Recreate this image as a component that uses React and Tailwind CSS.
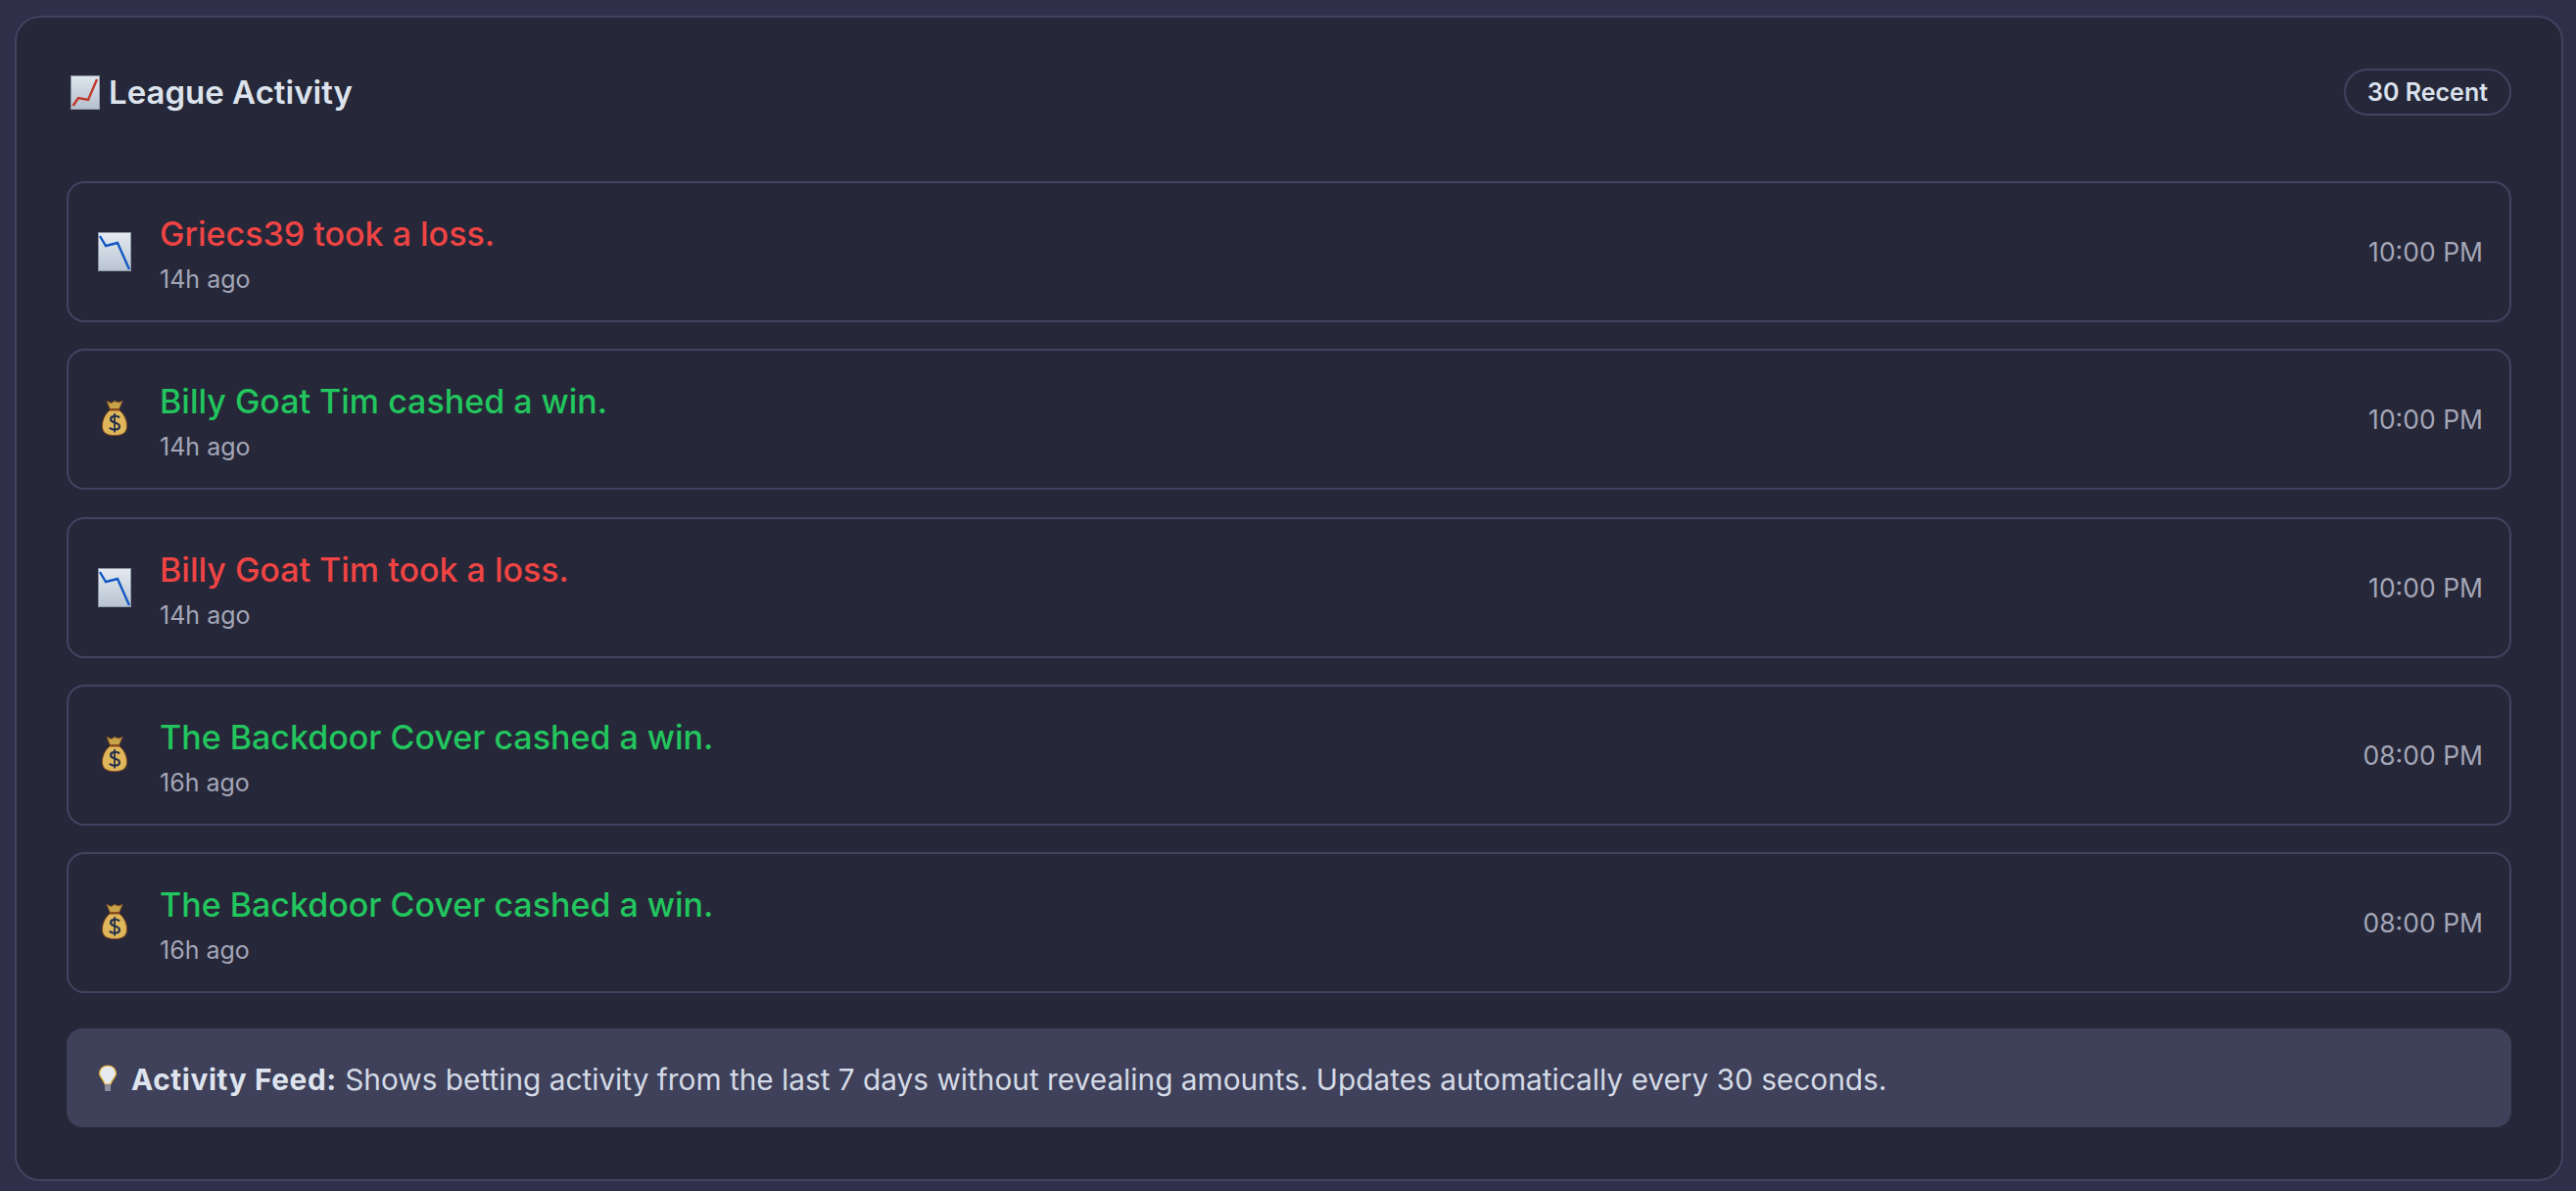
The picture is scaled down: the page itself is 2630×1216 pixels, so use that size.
const FONT = { fontFamily: 'Inter, "Liberation Sans", sans-serif' };

const rows = [
  { icon: 'down', text: 'Griecs39 took a loss.', color: 'text-[#ef4444]', ago: '14h ago', time: '10:00 PM' },
  { icon: 'bag', text: 'Billy Goat Tim cashed a win.', color: 'text-[#22c55e]', ago: '14h ago', time: '10:00 PM' },
  { icon: 'down', text: 'Billy Goat Tim took a loss.', color: 'text-[#ef4444]', ago: '14h ago', time: '10:00 PM' },
  { icon: 'bag', text: 'The Backdoor Cover cashed a win.', color: 'text-[#22c55e]', ago: '16h ago', time: '08:00 PM' },
  { icon: 'bag', text: 'The Backdoor Cover cashed a win.', color: 'text-[#22c55e]', ago: '16h ago', time: '08:00 PM' },
];

// emoji drawn by hand, no emoji font in the sandbox
function ChartUp() {
  return (
    <svg width="30" height="35" viewBox="0 0 30 35" className="shrink-0">
      <defs>
        <linearGradient id="paperUp" x1="0" y1="0" x2="0" y2="1">
          <stop offset="0" stopColor="#dfe6ee" />
          <stop offset="1" stopColor="#b4bfcd" />
        </linearGradient>
      </defs>
      <rect x="0.5" y="0.5" width="29" height="34" fill="url(#paperUp)" stroke="#8f98aa" />
      <path d="M2.5 31 L8 23 L18 25 L27 4" fill="none" stroke="#c0392b" strokeWidth="2.4" />
    </svg>
  );
}

function ChartDown() {
  return (
    <svg width="34" height="40" viewBox="0 0 34 40">
      <defs>
        <linearGradient id="paperDown" x1="0" y1="0" x2="0" y2="1">
          <stop offset="0" stopColor="#e4eaf1" />
          <stop offset="1" stopColor="#b9c4d2" />
        </linearGradient>
      </defs>
      <rect x="0.5" y="0.5" width="33" height="39" fill="url(#paperDown)" stroke="#8f98aa" />
      <path d="M2 4 L8 14 L20 11 L32 38" fill="none" stroke="#1259c3" strokeWidth="2.4" />
    </svg>
  );
}

function MoneyBag() {
  return (
    <svg width="26" height="36" viewBox="0 0 26 36" className="mb-[2px]">
      <path d="M5 0.5 L9.5 2.5 L13 0.5 L17 2 L21 0.5 L17.5 9 L8.5 9 Z" fill="#c9a34a" stroke="#8a5a24" strokeWidth="1" />
      <path d="M8.5 9.5 L17.5 9.5 C23 14 25.5 20 25.5 26 C25.5 33 21 35.5 13 35.5 C5 35.5 0.5 33 0.5 26 C0.5 20 3 14 8.5 9.5 Z" fill="#dfb75a" stroke="#8a4b20" strokeWidth="1" />
      <rect x="8" y="8" width="10" height="2.5" fill="#8a4b20" />
      <path d="M18 17.5 C16 15 9 15 9 19 C9 23.5 18 21.5 18 26.5 C18 30.5 10 30.5 8 27.5" fill="none" stroke="#24304f" strokeWidth="2.2" />
      <path d="M13 13 L13 32.5" stroke="#24304f" strokeWidth="1.8" />
    </svg>
  );
}

function Bulb() {
  return (
    <svg width="18" height="28" viewBox="0 0 18 28" className="shrink-0">
      <path d="M9 1 C14 1 17.5 4.5 17.5 9 C17.5 13 13 15.5 12 20 L6 20 C5 15.5 0.5 13 0.5 9 C0.5 4.5 4 1 9 1 Z" fill="#e6eaee" stroke="#e0ac2e" strokeWidth="1.2" />
      <rect x="6" y="20" width="6" height="7" fill="#8b8d9c" />
    </svg>
  );
}

function Row({ icon, text, color, ago, time }) {
  return (
    <div className="flex h-[144px] items-center border-2 border-[#424360] rounded-[18px] pl-[30px] pr-[27px]">
      <div className="w-[34px] flex justify-center shrink-0">
        {icon === 'down' ? <ChartDown /> : <MoneyBag />}
      </div>
      <div className="ml-[29px] flex-1 pt-[3px]">
        <div className={`text-[34px] leading-[44px] font-[450] ${color}`}>{text}</div>
        <div className="text-[25px] leading-[30px] mt-[9px] text-[#a3a6b8]">{ago}</div>
      </div>
      <div className="text-[26.5px] mt-[2px] text-[#a3a6b8]">{time}</div>
    </div>
  );
}

export default function App() {
  return (
    <div style={FONT} className="h-[1216px] bg-[#2f2f4a] pt-[16px] pl-[15px] pr-[13px] pb-[10px]">
      <div className="h-full border-2 border-[#424360] rounded-[26px] bg-[#262738] px-[51px] flex flex-col">
        <div className="h-[167px] flex items-start justify-between shrink-0">
          <div className="flex items-center gap-[9px] mt-[56px] ml-[4px]">
            <ChartUp />
            <span className="text-[33px] leading-[40px] font-semibold text-[#dce3ed]">League Activity</span>
          </div>
          <div className="mt-[52px] h-[48px] flex items-center pt-[2px] px-[22px] border-2 border-[#424360] rounded-full text-[25px] font-semibold text-[#d9e1ec]">
            30 Recent
          </div>
        </div>
        <div className="flex flex-col gap-[27.3px]">
          {rows.map((r, i) => (
            <Row key={i} {...r} />
          ))}
        </div>
        <div className="mt-[36px] h-[101px] flex items-center gap-[15px] rounded-[16px] bg-[#3f4059] pl-[33px] text-[29.8px] text-[#d3dae6]">
          <Bulb />
          <p className="pt-[3px]"><strong className="font-bold tracking-[0.6px] text-[#dde4ee]">Activity Feed:</strong> Shows betting activity from the last 7 days without revealing amounts. Updates automatically every 30 seconds.</p>
        </div>
      </div>
    </div>
  );
}
